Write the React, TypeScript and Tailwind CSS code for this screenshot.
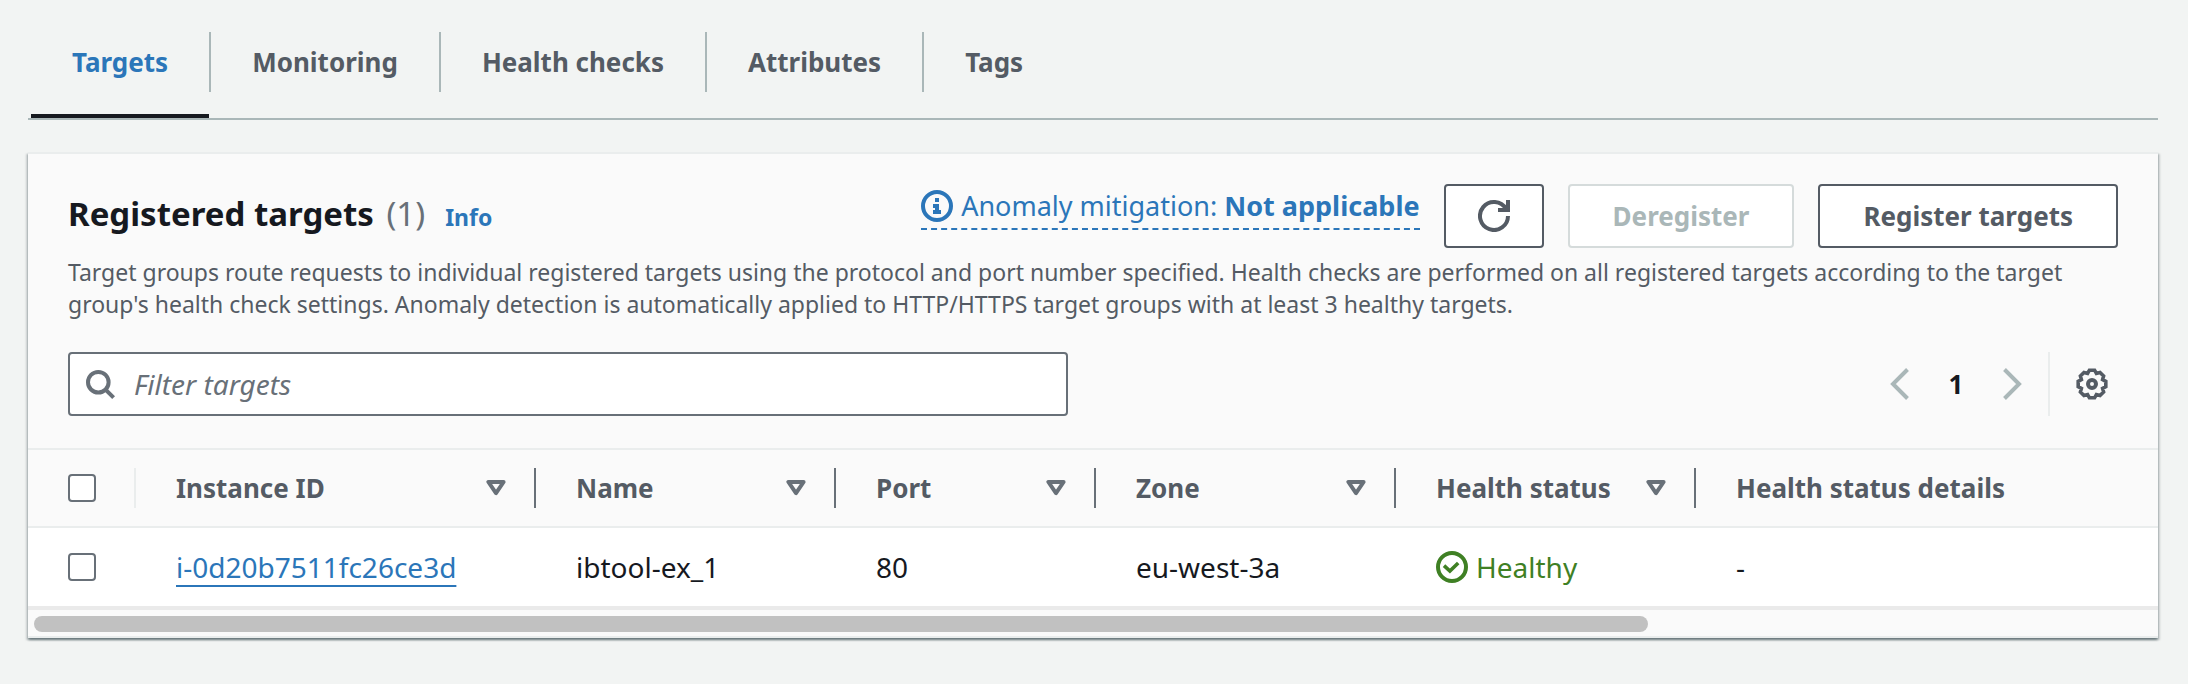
import { useState, type ReactNode } from 'react';

const tabs = ['Targets', 'Monitoring', 'Health checks', 'Attributes', 'Tags'];

const columns = [
  { title: 'Instance ID', sortable: true },
  { title: 'Name', sortable: true },
  { title: 'Port', sortable: true },
  { title: 'Zone', sortable: true },
  { title: 'Health status', sortable: true },
  { title: 'Health status details', sortable: false },
];

function Icon({ children, className = '' }: { children: ReactNode; className?: string }) {
  return (
    <svg viewBox="0 0 32 32" className={`size-8 shrink-0 ${className}`} fill="none" stroke="currentColor" strokeWidth="4" aria-hidden="true">
      {children}
    </svg>
  );
}

function InfoIcon() {
  return (
    <Icon>
      <circle cx="16" cy="16" r="14" />
      <path stroke="none" fill="currentColor" d="M14 8h4v4h-4zM12 14h6v6h2v4h-8v-4h2v-2h-2z" />
    </Icon>
  );
}

function RefreshIcon() {
  return (
    <Icon>
      <path d="M30 16A14 14 0 1 1 28 8.8" />
      <path d="M30 0V10H20" />
    </Icon>
  );
}

function SearchIcon() {
  return (
    <Icon className="text-[#687078]">
      <circle cx="14.3" cy="14.2" r="10.3" />
      <path d="M21.3 21.3L29.6 29.6" />
    </Icon>
  );
}

function GearIcon() {
  return (
    <Icon>
      <path
        strokeWidth="3.6"
        d="M29.8 13.4V18.6L26.6 20.4L27.6 24L24 27.6L20.4 26.6L18.6 29.8H13.4L11.6 26.6L8 27.6L4.4 24L5.4 20.4L2.2 18.6V13.4L5.4 11.6L4.4 8L8 4.4L11.6 5.4L13.4 2.2H18.6L20.4 5.4L24 4.4L27.6 8L26.6 11.6Z"
      />
      <circle cx="16" cy="16" r="4" />
    </Icon>
  );
}

function CheckCircleIcon() {
  return (
    <Icon>
      <circle cx="16" cy="16" r="14" />
      <path strokeWidth="3.6" d="M8 14.6L13.9 20L22.2 12" />
    </Icon>
  );
}

function SortIcon() {
  return (
    <svg viewBox="0 0 20 16" className="h-4 w-5 shrink-0 text-[#687078]" fill="none" stroke="currentColor" strokeWidth="4" strokeLinejoin="round" aria-hidden="true">
      <path d="M2.4 2H17.6L10 13.2Z" />
    </svg>
  );
}

function Checkbox({ label }: { label: string }) {
  return (
    <input
      type="checkbox"
      aria-label={label}
      className="block size-7 appearance-none rounded-sm border-2 border-[#687078] bg-white checked:bg-[#2b76b9]"
    />
  );
}

function TabBar() {
  const [active, setActive] = useState('Targets');
  return (
    <nav role="tablist" className="flex border-b-2 border-[#aab7b8] pt-8 pl-[3px]">
      {tabs.map((tab, i) => (
        <div key={tab} className="flex flex-col">
          <button
            type="button"
            role="tab"
            aria-selected={tab === active}
            onClick={() => setActive(tab)}
            className={`h-15 px-[41px] text-[26px] leading-9 font-bold ${i < tabs.length - 1 ? 'border-r-2 border-[#aab7b8]' : ''} ${
              tab === active ? 'text-[#2b76b9]' : 'text-[#545b64]'
            }`}
          >
            {tab}
          </button>
          <div className={`mt-[22px] mr-0.5 h-1 ${tab === active ? 'bg-[#16191f]' : ''}`} />
        </div>
      ))}
    </nav>
  );
}

function TargetsHeader() {
  return (
    <header>
      <div className="flex items-start justify-between gap-6">
        <h2 className="text-[33px] leading-[60px] font-bold text-[#16191f]">
          Registered targets <span className="ml-1 font-normal text-[#687078]">(1)</span>
          <a href="#info" className="ml-5 text-[23px] text-[#2b76b9]">
            Info
          </a>
        </h2>
        <div className="flex items-start gap-6 text-[26px] leading-9 font-bold text-[#545b64]">
          <a href="#anomaly" className="flex items-center gap-2 border-b-2 border-dashed border-[#2b76b9] text-[#2b76b9]">
            <InfoIcon />
            <span className="text-[27px] leading-[44px] font-normal">
              Anomaly mitigation: <b>Not applicable</b>
            </span>
          </a>
          <button type="button" aria-label="Refresh" className="flex h-16 items-center rounded-sm border-2 border-[#545b64] bg-white px-8">
            <RefreshIcon />
          </button>
          <button type="button" disabled className="h-16 rounded-sm border-2 border-[#d5dbdb] bg-white px-[43px] text-[#aab7b8]">
            Deregister
          </button>
          <button type="button" className="h-16 rounded-sm border-2 border-[#545b64] bg-white px-[43px]">
            Register targets
          </button>
        </div>
      </div>
      <p className="mt-2 text-[23px] leading-8 text-[#545b64]">
        Target groups route requests to individual registered targets using the protocol and port number specified. Health checks are
        performed on all registered targets according to the target group's health check settings. Anomaly detection is automatically
        applied to HTTP/HTTPS target groups with at least 3 healthy targets.
      </p>
    </header>
  );
}

function Toolbar() {
  return (
    <div className="mt-8 flex items-center justify-between">
      <label className="flex h-16 w-[1000px] items-center gap-[18px] rounded-sm border-2 border-[#687078] bg-white pl-3.5">
        <SearchIcon />
        <input
          type="text"
          aria-label="Filter targets"
          placeholder="Filter targets"
          className="min-w-0 grow bg-transparent text-[28px] leading-9 outline-none placeholder:text-[#687078] placeholder:italic"
        />
      </label>
      <div className="flex items-center text-[#545b64]">
        <button type="button" disabled aria-label="Previous page" className="text-[#aab7b8]">
          <Icon>
            <path d="M23.5 1.5L9 16L23.5 30.5" />
          </Icon>
        </button>
        <button type="button" aria-current="page" className="w-20 text-[26px] leading-9 font-bold text-[#16191f]">
          1
        </button>
        <button type="button" disabled aria-label="Next page" className="text-[#aab7b8]">
          <Icon>
            <path d="M8.5 1.5L23 16L8.5 30.5" />
          </Icon>
        </button>
        <div className="ml-5 h-16 border-l-2 border-[#eaeded] pl-[26px]" />
        <button type="button" aria-label="Preferences" className="mr-2.5">
          <GearIcon />
        </button>
      </div>
    </div>
  );
}

function TargetsTable() {
  return (
    <table className="mt-8 w-full table-fixed border-collapse text-left text-[28px] leading-9 text-[#16191f]">
      <colgroup>
        <col className="w-[108px]" />
        <col className="w-[400px]" />
        <col className="w-[300px]" />
        <col className="w-[260px]" />
        <col className="w-[300px]" />
        <col className="w-[300px]" />
        <col />
      </colgroup>
      <thead className="border-y-2 border-[#eaeded]">
        <tr>
          <th className="h-[78px] p-0">
            <div className="flex h-10 items-center border-r-2 border-[#eaeded] pl-10">
              <Checkbox label="Select all targets" />
            </div>
          </th>
          {columns.map(({ title, sortable }) => (
            <th key={title} className="p-0 text-[26px] font-bold text-[#545b64]">
              <div className={`flex h-10 items-center justify-between pr-7 pl-10 ${sortable ? 'border-r-2 border-[#687078]' : ''}`}>
                {title}
                {sortable && (
                  <button type="button" aria-label={`Sort by ${title}`}>
                    <SortIcon />
                  </button>
                )}
              </div>
            </th>
          ))}
        </tr>
      </thead>
      <tbody>
        <tr className="border-b-4 border-[#eaeaea] bg-white">
          <td className="h-[81px] p-0 pl-10">
            <Checkbox label="Select i-0d20b7511fc26ce3d" />
          </td>
          <td className="p-0 pl-10">
            <a href="#instance" className="text-[#2b76b9] underline decoration-2 underline-offset-[7px] [text-decoration-skip-ink:none]">
              i-0d20b7511fc26ce3d
            </a>
          </td>
          <td className="p-0 pl-10">ibtool-ex_1</td>
          <td className="p-0 pl-10">80</td>
          <td className="p-0 pl-10">eu-west-3a</td>
          <td className="p-0 pl-10">
            <span className="flex items-center gap-2 text-[#3f8024]">
              <CheckCircleIcon />
              Healthy
            </span>
          </td>
          <td className="p-0 pl-10">-</td>
        </tr>
      </tbody>
    </table>
  );
}

export default function App() {
  return (
    <main className="min-h-screen bg-[#f2f4f3] pr-[30px] pl-7 font-['Noto_Sans','Open_Sans',sans-serif]">
      <TabBar />
      <section className="mt-8 border-y-2 border-[#eaeded] bg-[#fafafa] shadow-[0_2px_2px_0_rgba(0,28,36,0.4),2px_2px_2px_0_rgba(0,28,36,0.15),-2px_2px_2px_0_rgba(0,28,36,0.15)]">
        <div className="px-10 pt-[30px]">
          <TargetsHeader />
          <Toolbar />
        </div>
        <TargetsTable />
        <div className="px-1.5 pt-1.5 pb-1">
          <div className="h-4 w-16/21 rounded-full bg-[#c1c1c1]" />
        </div>
      </section>
    </main>
  );
}
